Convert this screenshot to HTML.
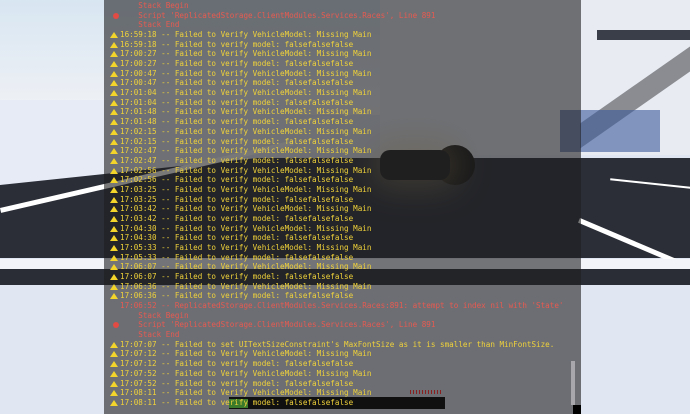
<!DOCTYPE html>
<html><head><meta charset="utf-8"><style>
*{margin:0;padding:0;box-sizing:border-box}
body{width:690px;height:414px;overflow:hidden;position:relative;background:#e0e6f2;font-family:"DejaVu Sans Mono","Liberation Mono",monospace}
.a{position:absolute}
#log{position:absolute;left:104px;top:0;width:477px;height:414px;background:rgba(30,30,32,0.6);overflow:hidden}
.l{position:absolute;z-index:2;left:16px;height:9.68px;line-height:9.68px;font-size:7.6px;white-space:pre;color:#f0d23a}
.r{color:#e85a50}
.w{position:absolute;left:-10px;top:2px;width:0;height:0;border-left:4px solid transparent;border-right:4px solid transparent;border-bottom:6px solid #f2d42a}
.e{position:absolute;left:-7px;top:2px;width:6px;height:6px;border-radius:50%;background:#e24a44}
</style></head><body>
<!-- scene -->
<div class="a" style="left:0;top:0;width:400px;height:115px;background:linear-gradient(#d8e6f2,#f0f1f5)"></div>
<div class="a" style="left:0;top:100px;width:300px;height:80px;background:#e6ebf5"></div>
<div class="a" style="left:380px;top:0;width:310px;height:155px;background:#e8ebf2"></div>
<div class="a" style="left:597px;top:30px;width:93px;height:10px;background:#3a3e48"></div>
<div class="a" style="left:580px;top:85px;width:110px;height:25px;background:#8a8c92;transform:skewY(-35deg)"></div>
<div class="a" style="left:560px;top:110px;width:100px;height:42px;background:#3a5a9a;opacity:.6"></div>
<div class="a" style="left:0;top:158px;width:690px;height:100px;background:#2b2e37"></div>
<div class="a" style="left:0;top:150px;width:330px;height:35px;background:#e6ebf5;transform:skewY(-6deg);transform-origin:0 0"></div>
<div class="a" style="left:0;top:208px;width:300px;height:5px;background:#fff;transform:rotate(-13deg);transform-origin:0 0"></div>
<div class="a" style="left:580px;top:218px;width:130px;height:5px;background:#fff;transform:rotate(23deg);transform-origin:0 0"></div>
<div class="a" style="left:610px;top:183px;width:90px;height:2px;background:#fff;transform:rotate(6deg)"></div>
<div class="a" style="left:0;top:259px;width:690px;height:10px;background:#f2f4fa"></div>
<div class="a" style="left:0;top:269px;width:690px;height:16px;background:#2a2d36"></div>
<div class="a" style="left:435px;top:145px;width:40px;height:40px;border-radius:50%;background:#111"></div>
<div class="a" style="left:380px;top:150px;width:70px;height:30px;border-radius:10px;background:#222;box-shadow:0 0 30px 10px rgba(220,190,120,.35)"></div>
<!-- console -->
<div id="log">
<div class="a" style="z-index:1;left:125px;top:397px;width:216px;height:12px;background:rgba(0,0,0,.85)"></div>
<div class="a" style="z-index:1;left:125px;top:399px;width:19px;height:9px;background:#3a7a2a"></div>
<div class="a" style="z-index:1;left:306px;top:390px;width:32px;height:4px;background:repeating-linear-gradient(90deg,#8a2020 0 1px,transparent 1px 3px)"></div>
<div class="l r" style="top:-8.7px">17:06:52 -- ReplicatedStorage.ClientModules.Services.Races:891: attempt to index nil with 'State'</div>
<div class="l r" style="top:0.98px">    Stack Begin</div>
<div class="l r" style="top:10.66px"><span class="e"></span>    Script 'ReplicatedStorage.ClientModules.Services.Races', Line 891</div>
<div class="l r" style="top:20.34px">    Stack End</div>
<div id="w"></div>
</div>
<div class="a" style="left:571px;top:361px;width:4px;height:44px;background:#a8a8ac"></div>
<div class="a" style="left:573px;top:405px;width:8px;height:9px;background:#000"></div>
<script>
var L=[
["16:59:18","V"],["16:59:18","v"],["17:00:27","V"],["17:00:27","v"],["17:00:47","V"],["17:00:47","v"],
["17:01:04","V"],["17:01:04","v"],["17:01:48","V"],["17:01:48","v"],["17:02:15","V"],["17:02:15","v"],
["17:02:47","V"],["17:02:47","v"],["17:02:56","V"],["17:02:56","v"],["17:03:25","V"],["17:03:25","v"],
["17:03:42","V"],["17:03:42","v"],["17:04:30","V"],["17:04:30","v"],["17:05:33","V"],["17:05:33","v"],
["17:06:07","V"],["17:06:07","v"],["17:06:36","V"],["17:06:36","v"],
["R0"],["R1"],["R2"],["R3"],
["17:07:07","U"],["17:07:12","V"],["17:07:12","v"],["17:07:52","V"],["17:07:52","v"],["17:08:11","V"],["17:08:11","v"]];
var h="",lh=9.68;
for(var i=0;i<L.length;i++){var t=-8.7+(i+4)*lh,x=L[i],s;
if(x[0]=="R0")s='<div class="l r" style="top:'+t+'px">17:06:52 -- ReplicatedStorage.ClientModules.Services.Races:891: attempt to index nil with \'State\'</div>';
else if(x[0]=="R1")s='<div class="l r" style="top:'+t+'px">    Stack Begin</div>';
else if(x[0]=="R2")s='<div class="l r" style="top:'+t+'px"><span class="e"></span>    Script \'ReplicatedStorage.ClientModules.Services.Races\', Line 891</div>';
else if(x[0]=="R3")s='<div class="l r" style="top:'+t+'px">    Stack End</div>';
else{var m=x[1]=="V"?"Failed to Verify VehicleModel: Missing Main":x[1]=="v"?"Failed to verify model: falsefalsefalse":"Failed to set UITextSizeConstraint's MaxFontSize as it is smaller than MinFontSize.";
s='<div class="l" style="top:'+t+'px"><span class="w"></span>'+x[0]+' -- '+m+'</div>';}
h+=s;}
document.getElementById("w").outerHTML=h;
</script>
</body></html>
